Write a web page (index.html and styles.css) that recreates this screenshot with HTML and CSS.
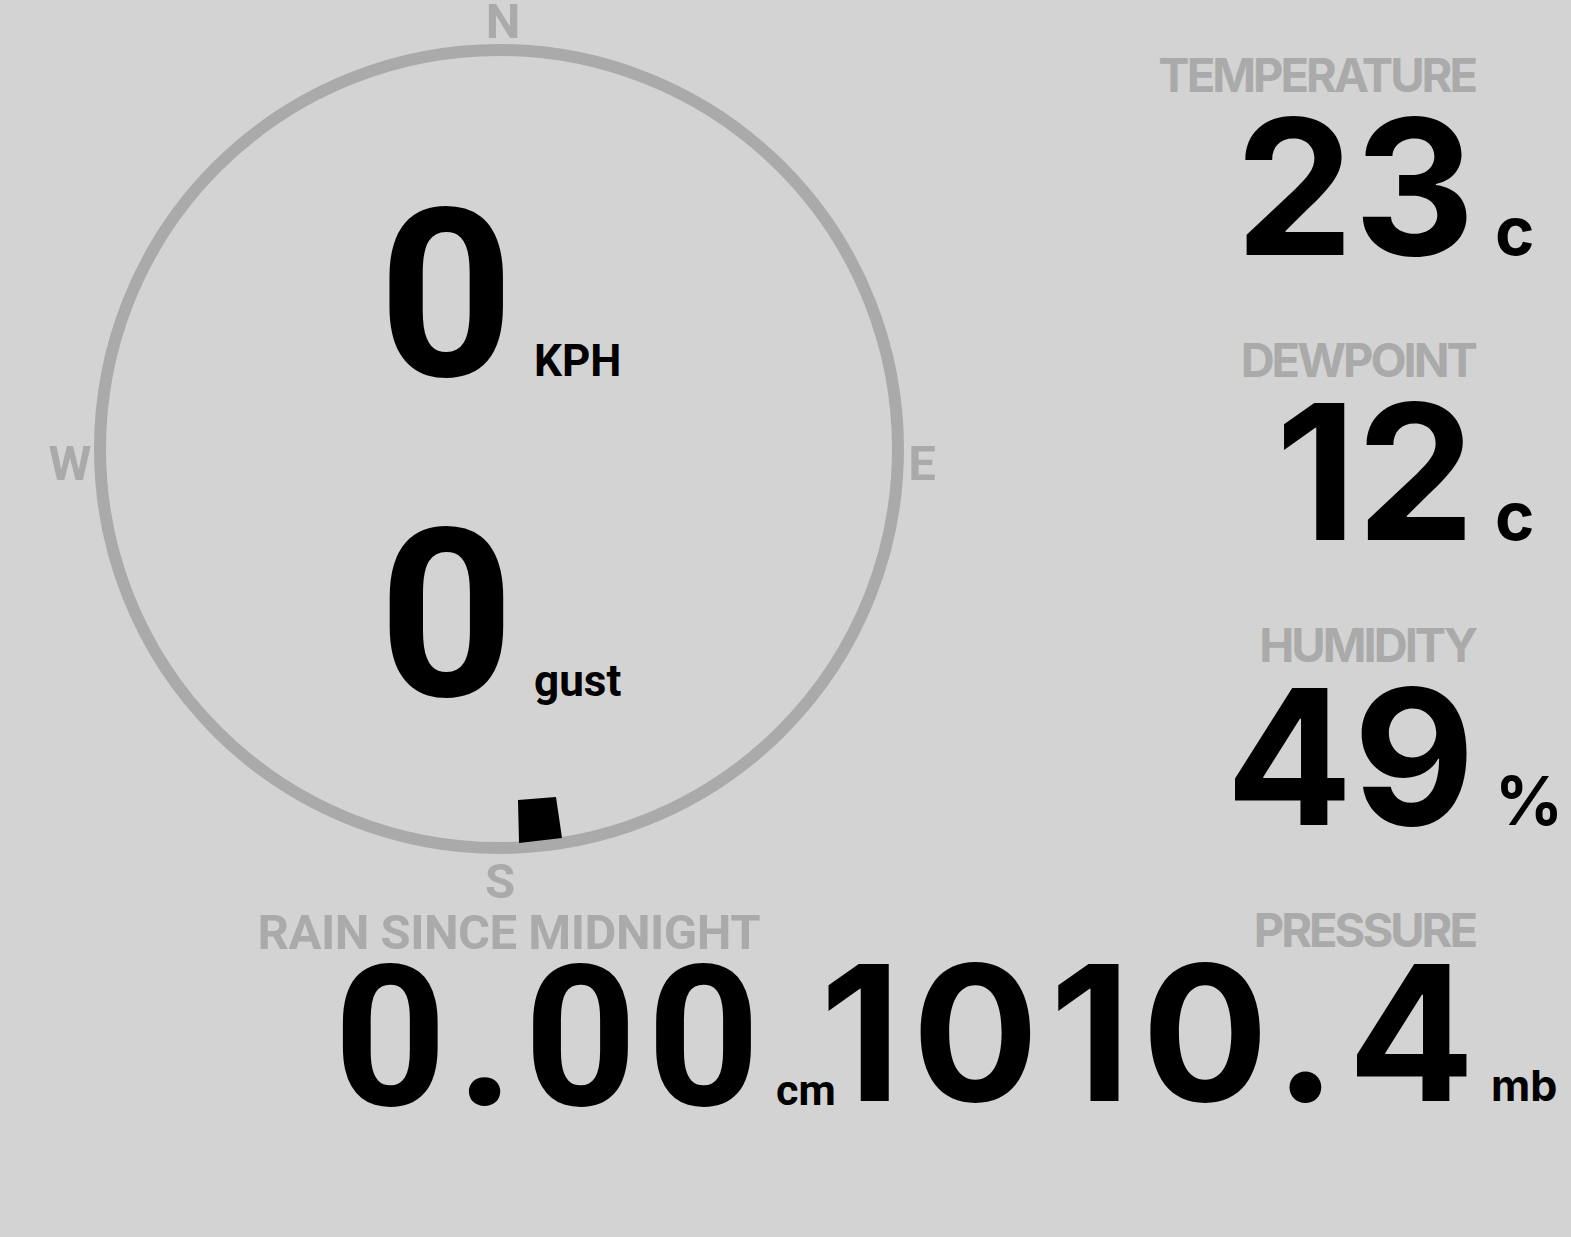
FILE: index.html
```html
<!DOCTYPE html>
<html lang="en">
<head>
  <meta charset="UTF-8" />
  <meta name="viewport" content="width=device-width, initial-scale=1" />
  <title>Weather</title>
  <link rel="stylesheet" href="styles.css">
</head>
<body>
  <div class="board">
    <div class="compass">
      <svg class="dial" width="1000" height="900" viewBox="0 0 1000 900">
        <circle cx="499" cy="449" r="399" />
        <text x="503" y="38" text-anchor="middle">N</text>
        <text x="922" y="480" text-anchor="middle">E</text>
        <text x="500" y="898" text-anchor="middle">S</text>
        <text x="70" y="480" text-anchor="middle">W</text>
        <polygon class="vane" points="518,800 556,797 562,838 519,843" />
      </svg>
      <div class="wind">
        <div class="wind-row"><span class="speed">0</span><span class="wind-unit">KPH</span></div>
        <div class="wind-row"><span class="speed">0</span><span class="wind-unit">gust</span></div>
      </div>
    </div>

    <div class="metric">
      <div class="metric-label">TEMPERATURE</div>
      <div class="metric-value">23</div>
      <div class="metric-unit lg">c</div>
    </div>

    <div class="metric">
      <div class="metric-label">DEWPOINT</div>
      <div class="metric-value">12</div>
      <div class="metric-unit lg">c</div>
    </div>

    <div class="metric">
      <div class="metric-label">HUMIDITY</div>
      <div class="metric-value">49</div>
      <div class="metric-unit lg">%</div>
    </div>

    <div class="metric rain">
      <div class="metric-label">RAIN SINCE MIDNIGHT</div>
      <div class="metric-value">0.00</div>
      <div class="metric-unit">cm</div>
    </div>

    <div class="metric">
      <div class="metric-label">PRESSURE</div>
      <div class="metric-value spaced">1010.4</div>
      <div class="metric-unit">mb</div>
    </div>
  </div>
</body>
</html>
```

FILE: styles.css
```css
html, body {
  margin: 0;
  background-color: #d3d3d3;
}

body {
  font-family: Inter, "Open Sans", sans-serif;
  color: #000;
  overflow: hidden;
}

.board {
  display: grid;
  grid-template-columns: 856px minmax(0, 1fr);
  grid-template-rows: repeat(3, 285px) auto;
  width: 1571px;
}

/* compass, drawn behind the wind readings */
.compass {
  grid-column: 1;
  grid-row: 1 / 4;
  width: 1000px;
  height: 855px;
  position: relative;
}

.dial {
  position: absolute;
  left: 0;
  top: 0;
  overflow: visible;
}

.dial circle {
  fill: none;
  stroke: #aaa;
  stroke-width: 12;
}

.dial text {
  font-family: Roboto, sans-serif;
  font-weight: 700;
  font-size: 49px;
  fill: #aaa;
}

.dial .vane {
  fill: #000;
}

.wind {
  position: relative;
  padding-top: 136px;
  font-family: Roboto, sans-serif;
  font-weight: 700;
}

.wind-row {
  display: flex;
  justify-content: center;
  align-items: baseline;
  gap: 20px;
  height: 320px;
  line-height: 320px;
}

.speed {
  font-size: 236px;
}

.wind-unit {
  font-size: 44px;
  line-height: 1;
}

/* metric blocks: label and value right aligned, unit hangs after */
.metric {
  grid-column: 2;
  display: grid;
  grid-template-columns: minmax(0, 1fr) 96px;
  align-items: baseline;
  padding-top: 51px;
  font-weight: 700;
}

.metric-label {
  grid-column: 1;
  text-align: right;
  font-size: 47px;
  line-height: 47px;
  letter-spacing: -3px;
  color: #aaa;
}

.metric-value {
  grid-column: 1;
  display: flex;
  justify-content: flex-end;
  white-space: nowrap;
  font-size: 188px;
  line-height: 135px;
}

.metric-value.spaced {
  margin-right: -11px;
  letter-spacing: 11px;
}

.metric-unit {
  grid-column: 2;
  padding-left: 16px;
  font-size: 43px;
  line-height: 1;
}

.metric-unit.lg {
  padding-left: 20px;
  font-size: 67px;
}

.rain {
  grid-column: 1;
  grid-row: 4;
  padding-top: 53px;
  font-family: Roboto, sans-serif;
}

.rain .metric-label {
  font-size: 49px;
  line-height: 49px;
  letter-spacing: -0.5px;
}

.rain .metric-value {
  margin-right: -10px;
  font-size: 197px;
  line-height: 161px;
  letter-spacing: 10px;
}
```
